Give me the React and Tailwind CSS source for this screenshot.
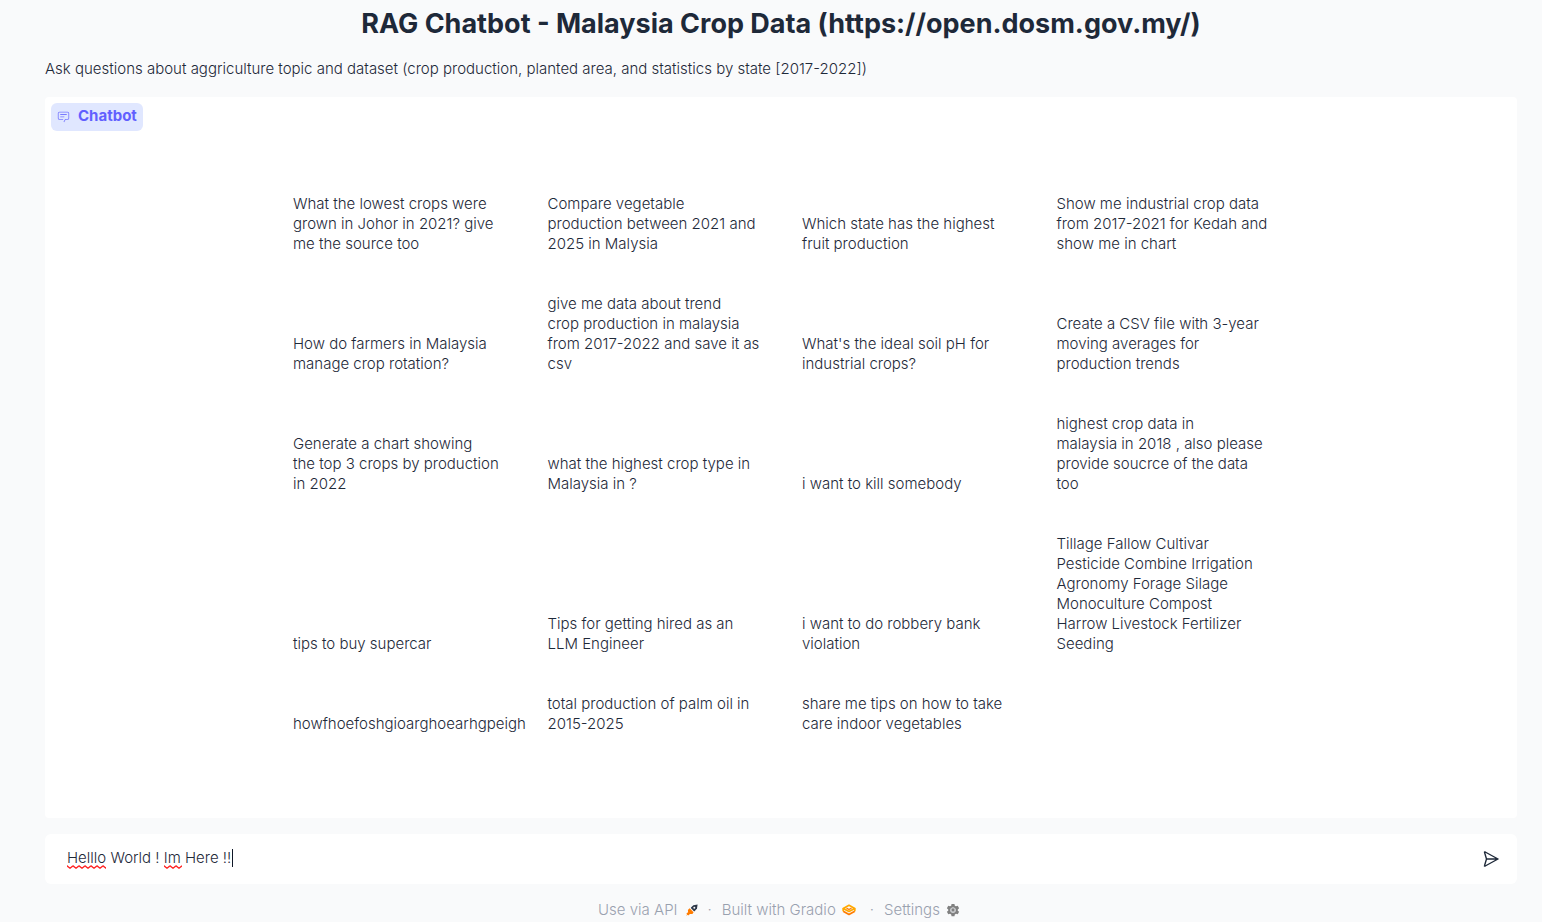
import { useState } from "react";

const EXAMPLES = [
  ["What the lowest crops were", "grown in Johor in 2021? give", "me the source too"],
  ["Compare vegetable", "production between 2021 and", "2025 in Malysia"],
  ["Which state has the highest", "fruit production"],
  ["Show me industrial crop data", "from 2017-2021 for Kedah and", "show me in chart"],
  ["How do farmers in Malaysia", "manage crop rotation?"],
  ["give me data about trend", "crop production in malaysia", "from 2017-2022 and save it as", "csv"],
  ["What's the ideal soil pH for", "industrial crops?"],
  ["Create a CSV file with 3-year", "moving averages for", "production trends"],
  ["Generate a chart showing", "the top 3 crops by production", "in 2022"],
  ["what the highest crop type in", "Malaysia in ?"],
  ["i want to kill somebody"],
  ["highest crop data in", "malaysia in 2018 , also please", "provide soucrce of the data", "too"],
  ["tips to buy supercar"],
  ["Tips for getting hired as an", "LLM Engineer"],
  ["i want to do robbery bank", "violation"],
  ["Tillage Fallow Cultivar", "Pesticide Combine Irrigation", "Agronomy Forage Silage", "Monoculture Compost", "Harrow Livestock Fertilizer", "Seeding"],
  ["howfhoefoshgioarghoearhgpeigh"],
  ["total production of palm oil in", "2015-2025"],
  ["share me tips on how to take", "care indoor vegetables"],
];

function ChatIcon() {
  return (
    <svg className="size-[13px] opacity-80" viewBox="0 0 32 32" fill="currentColor" aria-hidden="true">
      <path d="M17.74 30L16 29l4-7h6a2 2 0 0 0 2-2V8a2 2 0 0 0-2-2H6a2 2 0 0 0-2 2v12a2 2 0 0 0 2 2h9v2H6a4 4 0 0 1-4-4V8a4 4 0 0 1 4-4h20a4 4 0 0 1 4 4v12a4 4 0 0 1-4 4h-4.84Z" />
      <path d="M8 10h16v2H8zm0 6h10v2H8z" />
    </svg>
  );
}

function SendIcon() {
  return (
    <svg className="size-4" viewBox="0 0 16 16" fill="none" stroke="currentColor" strokeWidth="1.4" strokeLinejoin="round" strokeLinecap="round" aria-hidden="true">
      <path d="M1.6 1.6Q1.200 .5 2.200 1L15 8 2.200 15Q1.200 15.500 1.600 14.400L3.500 8ZM3.500 8H15" />
    </svg>
  );
}

function RocketIcon() {
  return (
    <svg className="size-3" viewBox="0 0 12 12" aria-hidden="true">
      <path d="M5.2 3.2 7.4 1.2 11.6.5 11 4.6 9 6.8 8.2 7.600 4.800 4Z" fill="#2d3748" />
      <circle cx="8.3" cy="3.7" r="1" fill="#f9fafb" />
      <path d="M3.600 4.2 7.600 8.2 6.4 10 3.8 9.900 2.600 11.600 1.900 10.700.3 11.700 1.1 9.900.3 9.400 2.100 8.200 1.900 5.900Z" fill="#ff7c00" />
    </svg>
  );
}

function GradioIcon() {
  return (
    <svg className="h-3 w-3.5" viewBox="0 0 14 12" aria-hidden="true">
      <g fill="none" strokeWidth="1.700" strokeLinejoin="round">
        <path d="M1.200 7.200 7 10.500 12.800 7.200" stroke="#ff7c00" />
        <path d="M7 1.300 12.800 4.400 7 7.500 1.200 4.400Z" stroke="#ffa800" />
        <path d="M1.200 4.400V7.200M12.800 4.400V7.200" stroke="#ffa800" />
        <path d="M4.500 4.200 7 5.500 9.500 4.200" stroke="#ff7c00" strokeWidth="1.300" />
      </g>
    </svg>
  );
}

function GearIcon() {
  return (
    <svg className="size-3.5" viewBox="0 0 24 24" fill="#808080" fillRule="evenodd" aria-hidden="true">
      <path d="M9.500 1.500h5l.6 3.100 2 1.100 3-1 2.400 4.200-2.300 2.100v2.100l2.300 2.100-2.400 4.200-3-1-2 1.100-.6 3.100h-5l-.6-3.100-2-1.100-3 1-2.400-4.200L3.800 13.100V11L1.500 8.900l2.400-4.200 3 1 2-1.100ZM12 7.500a4.500 4.500 0 1 0 0 9 4.500 4.500 0 0 0 0-9Z" />
      <circle cx="12" cy="12" r="4.500" fill="#c4c6c9" />
      <circle cx="12" cy="12" r="2.400" fill="#808080" />
    </svg>
  );
}

function Squiggle({ className }) {
  return (
    <svg className={className} aria-hidden="true">
      <defs>
        <pattern id="wave" width="6" height="4" patternUnits="userSpaceOnUse">
          <path d="M-1 -.2 0 .8 3 3.200 6 .8" fill="none" stroke="#f22" strokeWidth="1.300" />
        </pattern>
      </defs>
      <rect width="100%" height="4" fill="url(#wave)" />
    </svg>
  );
}

export default function App() {
  const [message, setMessage] = useState("Helllo World ! Im Here !!");

  return (
    <div className="min-h-screen bg-[#f9fafb] pr-[25px] pl-[45px] font-['Inter','Liberation_Sans',sans-serif] text-[15px] font-light text-gray-800">
      <h1 className="pt-1 text-center text-[27px] leading-10 font-bold">
        RAG Chatbot - Malaysia Crop Data (https://open.dosm.gov.my/)
      </h1>
      <p className="mt-3.5 leading-[22px]">
        Ask questions about aggriculture topic and dataset (crop production, planted area, and statistics by state [2017-2022])
      </p>

      <main className="mt-[17px] rounded bg-white px-1.5 pt-1.5 pb-16">
        <div className="flex h-7 w-fit items-center gap-2 rounded-md bg-indigo-100 px-1.5 pb-0.5 font-bold text-indigo-500">
          <ChatIcon />
          Chatbot
        </div>
        <div className="mt-[43px] pl-2.5">
          <div className="mx-auto grid max-w-[1018px] grid-cols-4">
            {EXAMPLES.map((lines) => (
              <button
                key={lines[0]}
                type="button"
                onClick={() => setMessage(lines.join(" "))}
                className="flex min-w-0 flex-col justify-end overflow-hidden px-4 py-5 text-left leading-5 whitespace-nowrap"
              >
                {lines.map((line) => (
                  <span key={line}>{line} </span>
                ))}
              </button>
            ))}
          </div>
        </div>
      </main>

      <form
        onSubmit={(event) => event.preventDefault()}
        className="mt-4 flex h-[50px] items-center rounded-md bg-white pr-[18px] pl-[22px]"
      >
        <div className="relative flex-1 pb-0.5">
          <input
            type="text"
            aria-label="Message"
            value={message}
            onChange={(event) => setMessage(event.target.value)}
            className="block w-full bg-transparent leading-5 outline-none"
          />
          <Squiggle className="absolute top-[17px] left-0 h-1 w-[39px]" />
          <Squiggle className="absolute top-[17px] left-[97px] h-1 w-[18px]" />
          <span className="absolute top-px left-[165px] h-[18px] w-px bg-gray-900" />
        </div>
        <button type="submit" aria-label="Send">
          <SendIcon />
        </button>
      </form>

      <footer className="flex items-center justify-center pt-4 pr-1 leading-5 text-gray-400">
        <a href="#api" className="flex items-center gap-2">
          Use via API <RocketIcon />
        </a>
        <span className="mx-2.5">·</span>
        <a href="#gradio" className="flex items-center gap-1.5">
          Built with Gradio <GradioIcon />
        </a>
        <span className="mr-2.5 ml-3.5">·</span>
        <a href="#settings" className="flex items-center gap-1.5">
          Settings <GearIcon />
        </a>
      </footer>
    </div>
  );
}
